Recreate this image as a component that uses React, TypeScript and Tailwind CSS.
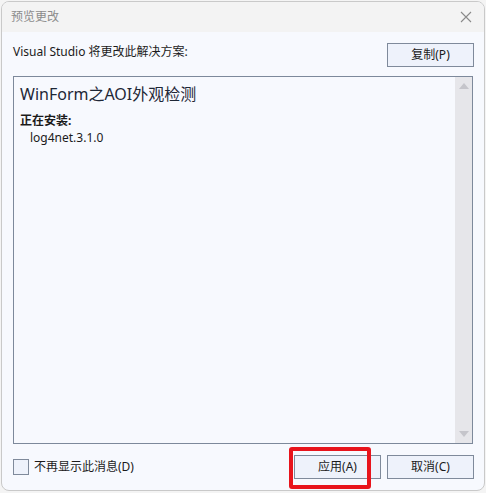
import React from "react"

const font = { fontFamily: '"Noto Sans", "Noto Sans CJK SC", sans-serif' }

function DialogButton({ label }: { label: string }) {
    return (
        <button className="w-[87px] h-[24px] border border-[#7f8a9b] bg-[#eef2fb] text-[12px] text-[#1b1b1b] leading-none flex items-center justify-center">
            {label}
        </button>
    )
}

export default function App() {
    return (
        <div className="w-[486px] h-[493px] bg-[#f4f4f4] relative" style={font}>
            <div className="absolute left-[1px] top-[1px] w-[484px] h-[490px] border border-[#c9c9c9] rounded-[8px] overflow-hidden bg-[#f7f9fe] flex flex-col">
                {/* title bar */}
                <div className="h-[30px] bg-[#f3f3f3] flex items-center justify-between pl-[9px] pr-[9px] shrink-0">
                    <span className="text-[12px] text-[#8c8c8c]">预览更改</span>
                    <svg width="14" height="14" viewBox="0 0 14 14" className="mr-[2px]">
                        <path d="M2 2 L12 12 M12 2 L2 12" stroke="#8a8a8a" strokeWidth="1.1" fill="none" />
                    </svg>
                </div>

                <div className="flex-1 flex flex-col pl-[11px] pr-[10px] pt-[11px] pb-[10px]">
                    <div className="flex items-center justify-between">
                        <span className="text-[12px] text-[#1b1b1b] mt-[-6px]">Visual Studio 将更改此解决方案:</span>
                        <DialogButton label="复制(P)" />
                    </div>

                    <div className="mt-[9px] h-[368px] w-[460px] border border-[#7d899b] flex">
                        <div className="flex-1 pl-[6px] pt-[6px] flex flex-col">
                            <span className="text-[16px] text-[#1e2736] leading-[22px]">WinForm之AOI外观检测</span>
                            <span className="text-[12px] font-bold text-[#1b1b1b] mt-[8px] leading-[16px]">正在安装:</span>
                            <span className="text-[12px] text-[#1b1b1b] pl-[10px] leading-[18px]">log4net.3.1.0</span>
                        </div>
                        <div className="w-[17px] bg-[#e6e6ea] flex flex-col items-center justify-between py-[6px]">
                            <svg width="10" height="6" viewBox="0 0 10 6"><path d="M0 6 L5 0 L10 6 Z" fill="#c5c5cb" /></svg>
                            <svg width="10" height="6" viewBox="0 0 10 6"><path d="M0 0 L5 6 L10 0 Z" fill="#c5c5cb" /></svg>
                        </div>
                    </div>

                    <div className="mt-[11px] flex items-center justify-between">
                        <label className="flex items-center gap-[5px]">
                            <span className="w-[16px] h-[16px] border border-[#7f8a9b] bg-[#eef2fb]" />
                            <span className="text-[12px] text-[#1b1b1b]">不再显示此消息(D)</span>
                        </label>
                        <div className="flex gap-[6px]">
                            <DialogButton label="应用(A)" />
                            <DialogButton label="取消(C)" />
                        </div>
                    </div>
                </div>
            </div>
            {/* red highlight */}
            <div className="absolute left-[289px] top-[447px] w-[82px] h-[42px] border-[4px] border-[#e8141c] rounded-[3px]" />
        </div>
    )
}
